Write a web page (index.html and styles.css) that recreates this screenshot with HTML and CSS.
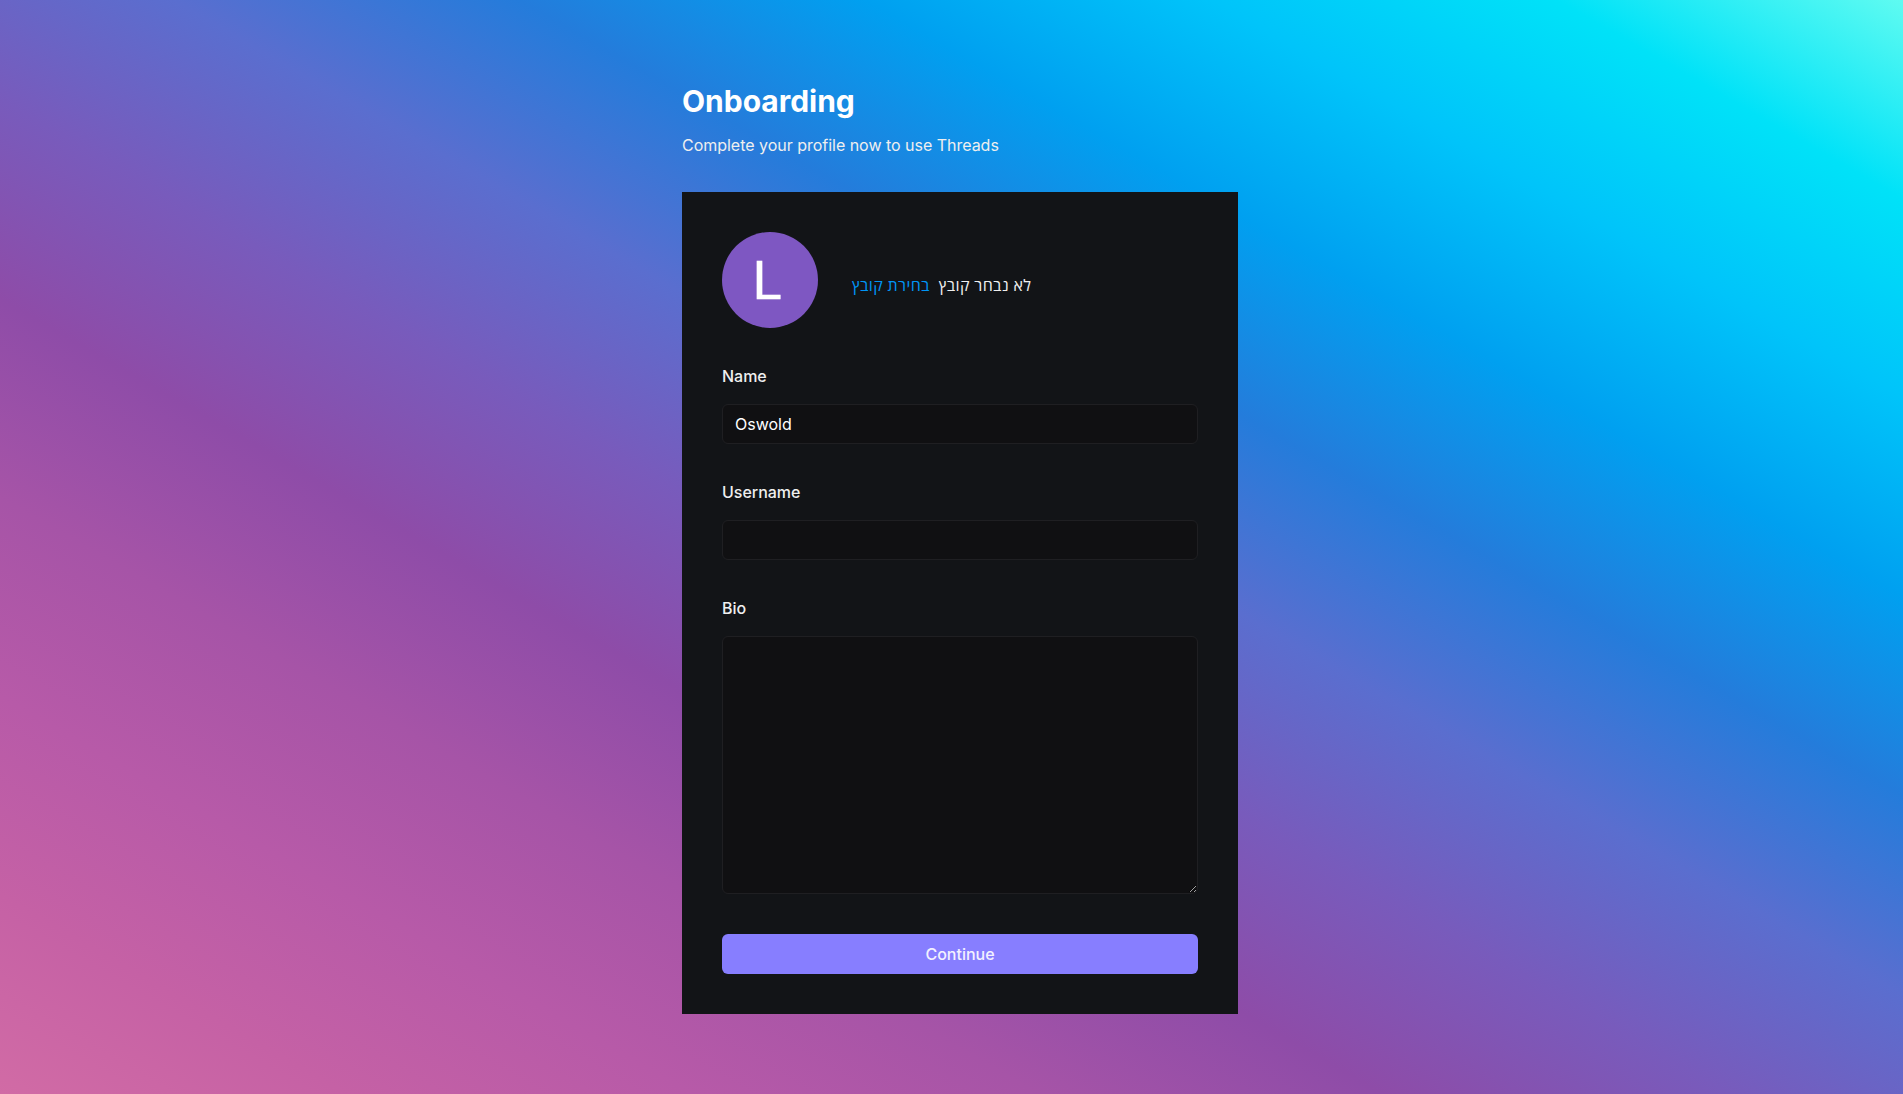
FILE: index.html
```html
<!DOCTYPE html>
<html lang="en">
<head>
<meta charset="utf-8">
<title>Onboarding</title>
<link rel="stylesheet" href="styles.css">
</head>
<body>
<main class="page">
  <h1 class="title">Onboarding</h1>
  <p class="subtitle">Complete your profile now to use Threads</p>
  <form class="card">
    <div class="photo">
      <div class="avatar"><span class="avatar-letter">L</span></div>
      <div class="file">
        <span class="file-button" dir="rtl" lang="he">בחירת קובץ</span>
        <span class="file-status" dir="rtl" lang="he">לא נבחר קובץ</span>
      </div>
    </div>
    <div class="field">
      <label class="label" for="name">Name</label>
      <input class="input" id="name" type="text" value="Oswold">
    </div>
    <div class="field">
      <label class="label" for="username">Username</label>
      <input class="input" id="username" type="text">
    </div>
    <div class="field">
      <label class="label" for="bio">Bio</label>
      <textarea class="input textarea" id="bio"></textarea>
    </div>
    <button class="submit" type="button">Continue</button>
  </form>
</main>
</body>
</html>
```
FILE: styles.css
```css
* { box-sizing: border-box; }

body {
  margin: 0;
  padding-left: 17px;
  height: 100vh;
  overflow: hidden;
  font-family: Inter, "Liberation Sans", sans-serif;
  font-size: 16px;
  letter-spacing: -0.02px;
  color: #fff;
  background: linear-gradient(to right top, #d16ba5, #c561a5, #b75aa8, #a654a7, #8e4ca8, #785bbc, #5a6ecf, #247cdb, #00a0f0, #00c4fa, #00e2f8, #5ffbf1);
}

.page {
  width: 636px;
  margin: 0 auto;
  padding: 80px 40px;
}

.title {
  margin: 0;
  font-size: 30px;
  line-height: 42px;
  font-weight: 700;
}

.subtitle {
  margin: 12px 0 36px;
  line-height: 22px;
  color: #efefef;
}

.card {
  display: flex;
  flex-direction: column;
  gap: 40px;
  padding: 40px;
  background: #121417;
}

.photo {
  display: flex;
  align-items: center;
  gap: 34px;
}

.avatar {
  display: flex;
  align-items: center;
  justify-content: center;
  width: 96px;
  height: 96px;
  padding: 2px 6px 0 0;
  border-radius: 50%;
  background: #7e57c2;
}

.avatar-letter {
  font-family: Roboto, sans-serif;
  font-size: 54px;
  line-height: 1;
  -webkit-text-stroke: 0.4px #fff;
}

.file {
  display: flex;
  gap: 9px;
  padding-top: 10px;
  font-family: "Open Sans", "Noto Sans", sans-serif;
  font-weight: 500;
  letter-spacing: 0.35px;
  line-height: 22px;
}

.file-button { color: #0095f6; }

.file-status { color: #efefef; }

.field {
  display: flex;
  flex-direction: column;
  gap: 20px;
}

.label {
  line-height: 16px;
  font-weight: 500;
  color: #efefef;
}

.input {
  display: block;
  width: 100%;
  height: 40px;
  padding: 8px 12px;
  border: 1px solid #1f1f22;
  border-radius: 6px;
  outline: none;
  background: #101012;
  color: #fff;
  font: inherit;
}

.textarea {
  height: 258px;
  resize: vertical;
}

.submit {
  height: 40px;
  border: 0;
  border-radius: 6px;
  background: #877eff;
  color: #f3f1ff;
  font: inherit;
  font-weight: 500;
}
```
